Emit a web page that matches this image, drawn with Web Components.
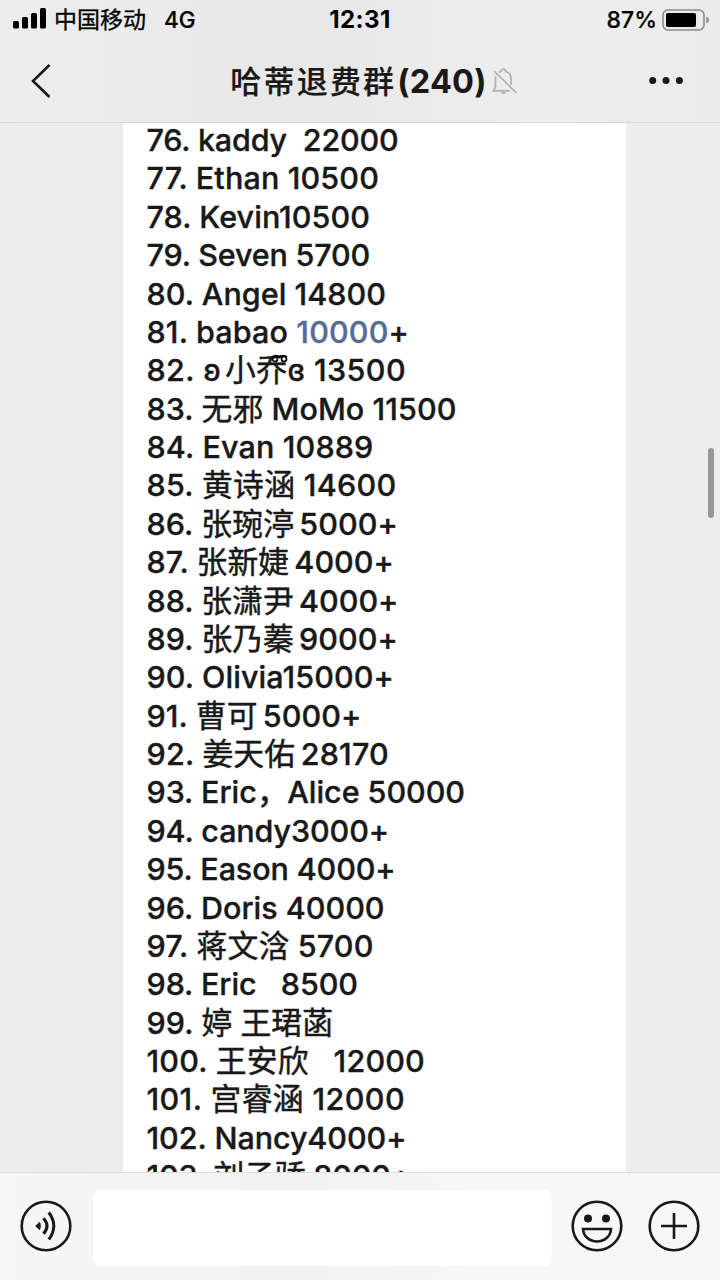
<!DOCTYPE html>
<html lang="zh-CN">
<head>
<meta charset="utf-8">
<title>哈蒂退费群</title>
<style>
  html, body {
    margin: 0;
    height: 100%;
  }

  body {
    overflow: hidden;
    font-family: Inter, "Noto Sans CJK SC", sans-serif;
    color: #191919;
    background: #ededed;
  }
</style>
</head>
<body>
<chat-screen>
  <status-bar slot="top" carrier="中国移动" network="4G" time="12:31" battery="87"></status-bar>
  <nav-bar slot="top" members="240">哈蒂退费群</nav-bar>
  <message-list></message-list>
  <chat-input slot="bottom"></chat-input>
</chat-screen>

<script>
/**
 * Base class: renders the template and the static STYLES of an element
 * into its shadow root.
 */
class BaseElement extends HTMLElement {
  constructor() {
    super();
    this.attachShadow({ mode: "open" });
  }

  connectedCallback() {
    this.shadowRoot.innerHTML = `
    <style>:host, * { box-sizing: border-box; } ${this.constructor.STYLES}</style>
    ${this.template()}`;
  }
}

class ChatScreen extends BaseElement {
  template() {
    return /* html */ `
    <header><slot name="top"></slot></header>
    <main>
      <slot></slot>
      <div class="thumb"></div>
    </main>
    <slot name="bottom"></slot>`;
  }

  static STYLES = /* css */ `
  :host {
    display: flex;
    flex-direction: column;
    width: 720px;
    height: 1280px;
    overflow: hidden;
  }

  header {
    flex: none;
    height: 123px;
    border-bottom: 1px solid #d9d9d9;
    background: linear-gradient(90deg, #ededed, #e8e8e8 42%, #eeeeee 75%, #ebebeb);
  }

  main {
    position: relative;
    flex: 1;
    min-height: 0;
    overflow: hidden;
  }

  /* the scroll thumb floats over the messages */
  .thumb {
    position: absolute;
    top: 325px;
    right: 6px;
    width: 6px;
    height: 70px;
    border-radius: 3px;
    background: #989898;
  }`;
}

class StatusBar extends BaseElement {
  template() {
    return /* html */ `
    <div class="left">
      <svg width="34" height="22" viewBox="0 0 34 22">
        <rect x="0" y="13" width="6" height="7.500" rx="1.500"/>
        <rect x="9" y="9" width="6" height="11.500" rx="1.500"/>
        <rect x="18" y="5" width="6" height="15.500" rx="1.500"/>
        <rect x="27" y="0" width="6" height="20.500" rx="1.500"/>
      </svg>
      <span class="carrier">${this.getAttribute("carrier")}</span>
      <span class="network">${this.getAttribute("network")}</span>
    </div>
    <b>${this.getAttribute("time")}</b>
    <div class="right">
      <span class="level">${this.getAttribute("battery")}%</span>
      <svg width="48" height="22" viewBox="0 0 48 22">
        <rect x="1" y="1" width="41" height="20" rx="5" fill="none" stroke="#8c8c8c" stroke-width="1.600"/>
        <rect x="4" y="4" width="30" height="14" rx="2"/>
        <path d="M44.300 7.500q2.800 1 2.800 3.500t-2.800 3.500z" fill="#8c8c8c"/>
      </svg>
    </div>`;
  }

  static STYLES = /* css */ `
  :host {
    display: grid;
    grid-template-columns: 1fr auto 1fr;
    align-items: center;
    height: 40px;
    padding: 0 10px;
    line-height: 40px;
    color: #000;
  }

  svg { flex: none; }

  .left, .right {
    display: flex;
    align-items: center;
  }

  .left svg { margin: -2px 0 0 3px; }
  .right svg { margin-top: -1px; }
  .carrier { margin: 0 0 0 7px; font-size: 23px; font-weight: 400; -webkit-text-stroke: .3px; }
  .network { margin-left: 18px; font-size: 22.500px; font-weight: 500; -webkit-text-stroke: .2px; }
  b { font-size: 24px; font-weight: 700; letter-spacing: .4px; }
  .right { justify-content: flex-end; }
  .level { margin-right: 5px; font-size: 23px; font-weight: 500; -webkit-text-stroke: .2px; }`;
}

class NavBar extends BaseElement {
  template() {
    return /* html */ `
    <svg class="back" width="22" height="38" viewBox="0 0 22 38">
      <path d="M19.500 3 3 19l16.500 16" fill="none" stroke="#191919" stroke-width="2.600"/>
    </svg>
    <div class="title">
      <h1><slot></slot><span>(${this.getAttribute("members")})</span></h1>
      <svg width="26" height="28" viewBox="0 0 26 28" fill="none" stroke="#b0b0b0" stroke-width="1.700">
        <path d="M4.500 9.500V20L2.500 23.800H19M8 5.500l2-1Q10.500 2 12.300 2t2.400 2.500Q20 6 20 11v7M3 4l22.500 22M10.500 25.800h4"/>
      </svg>
    </div>
    <svg class="more" width="36" height="8" viewBox="0 0 36 8" fill="#191919">
      <circle cx="3.700" cy="3.500" r="3.500"/><circle cx="17" cy="3.500" r="3.500"/><circle cx="30.400" cy="3.500" r="3.500"/>
    </svg>`;
  }

  static STYLES = /* css */ `
  :host {
    display: grid;
    grid-template-columns: 1fr auto 1fr;
    align-items: center;
    height: 82px;
    padding: 0 35px 0 30px;
  }

  /* the left padding keeps the name centred, with the bell hanging to its right */
  .title {
    display: flex;
    align-items: center;
    gap: 4px;
    padding-left: 32px;
  }

  h1 {
    margin: 1px 0 0;
    font-size: 31px;
    font-weight: 500;
    line-height: 40px;
    letter-spacing: 2.200px;
    white-space: nowrap;
    -webkit-text-stroke: .2px;
  }

  h1 span {
    margin-left: 1px;
    font-size: 32.500px;
    font-weight: 700;
    letter-spacing: .2px;
    -webkit-text-stroke: 0;
  }

  .more { justify-self: end; }`;
}

/* text of each row and the width it takes */
const MESSAGES = [
  ["76. kaddy  22000", 252],
  ["77. Ethan 10500", 232.500],
  ["78. Kevin10500", 223.500],
  ["79. Seven 5700", 223.500],
  ["80. Angel 14800", 239.500],
  ["81. babao <a>10000</a>+", 262.500],
  ["82. ʚ<b>小</b>乔<svg width='18' height='10' viewBox='0 0 18 10'><circle cx='5' cy='5' r='2.500'/><circle cx='14' cy='5' r='2.500'/><path d='M2 3q4-3 7.500.5Q13 0 17 3'/></svg>ɞ 13500", 259.500],
  ["83. 无邪 MoMo 11500", 310],
  ["84. Evan 10889", 227],
  ["85. 黄诗涵 14600", 250],
  ["86. 张琬渟<i> </i>5000+", 251.500],
  ["87. 张新婕<i> </i>4000+", 247.500],
  ["88. 张潇尹<i> </i>4000+", 252],
  ["89. 张乃蓁<i> </i>9000+", 251.500],
  ["90. Olivia15000+", 247.500],
  ["91. 曹可<i> </i>5000+", 215],
  ["92. 姜天佑<i> </i>28170", 242.500],
  ["93. Eric，Alice 50000", 318.500],
  ["94. candy3000+", 242.500],
  ["95. Eason 4000+", 249],
  ["96. Doris 40000", 238],
  ["97. 蒋文浛 5700", 227],
  ["98. Eric   8500", 211.500],
  ["99. 婷 王珺菡", 186.500],
  ["100. 王安欣   12000", 278.500],
  ["101. 宫睿涵 12000", 258.500],
  ["102. Nancy4000+", 260],
  ["103. 刘子骄 8000+", 264.500],
];

class MessageList extends BaseElement {
  template() {
    return MESSAGES.map(([text]) => {
      const html = text.replace(/[\u4e00-\u9fff]+/g, "<em>$&</em>");
      return `<p><span>${html}</span></p>`;
    }).join("");
  }

  connectedCallback() {
    super.connectedCallback();
    this.shadowRoot.querySelectorAll("p > span").forEach((line, i) => {
      const spare = MESSAGES[i][1] - line.getBoundingClientRect().width;
      line.style.letterSpacing = `${spare / line.textContent.length}px`;
    });
  }

  static STYLES = /* css */ `
  :host {
    display: block;
    width: 502.500px;
    height: 100%;
    margin-left: 123px;
    padding-left: 23.500px;
    overflow: hidden;
    background: #fff;
  }

  p {
    height: 38.380px;
    margin: 0;
    font-size: 30.500px;
    font-weight: 500;
    line-height: 38px;
    white-space: pre;
    -webkit-text-stroke: .35px;
  }

  style + p { margin-top: -2px; }
  a { color: #576b95; }
  b { margin-left: 4px; font-weight: inherit; }
  i { word-spacing: -3px; }
  em { font-size: 30.800px; font-style: normal; font-weight: 400; line-height: 1; -webkit-text-stroke: .45px; }

  /* the curl sits on top of the character before it */
  svg {
    margin: 0 0 17px -18px;
    fill: none;
    stroke: #000;
    stroke-width: 1.700;
  }`;
}

class ChatInput extends BaseElement {
  template() {
    return /* html */ `
    <svg width="52" height="52" viewBox="0 0 52 52">
      <circle cx="26" cy="26" r="24.300"/>
      <path class="solid" d="M15.200 26l4.600-4.200q2 4.200 0 8.400z"/>
      <path class="wave" d="M23.500 18.200q7 7.800 0 15.600M28.800 12.500q10 13.500 0 27"/>
    </svg>
    <div class="field"></div>
    <svg width="52" height="52" viewBox="0 0 52 52">
      <circle cx="26" cy="26" r="24.300"/>
      <circle class="solid" cx="17" cy="18.500" r="4"/>
      <circle class="solid" cx="35" cy="18.500" r="4"/>
      <path d="M12 29H40C39.500 36.500 33.500 41.500 26 41.500S12.500 36.500 12 29z"/>
    </svg>
    <svg width="52" height="52" viewBox="0 0 52 52">
      <circle cx="26" cy="26" r="24.300"/>
      <path d="M26 13v26M13 26h26"/>
    </svg>`;
  }

  static STYLES = /* css */ `
  :host {
    display: flex;
    flex: none;
    align-items: center;
    height: 108px;
    padding: 0 20.500px 1px 20px;
    border-top: 1px solid #dedede;
    background: linear-gradient(90deg, #f6f6f6, #f2f2f2 42%, #f7f7f7 65%);
  }

  svg {
    flex: none;
    fill: none;
    stroke: #191919;
    stroke-width: 2.600;
  }

  .solid { fill: #191919; stroke: none; }
  .wave { stroke-width: 3; }

  .field {
    flex: 1;
    height: 76px;
    margin: 4px 20px 0 20.500px;
    border-radius: 7px;
    background: #fff;
  }

  .field + svg { margin-right: 24.500px; }`;
}

customElements.define("chat-screen", ChatScreen);
customElements.define("status-bar", StatusBar);
customElements.define("nav-bar", NavBar);
customElements.define("message-list", MessageList);
customElements.define("chat-input", ChatInput);
</script>
</body>
</html>
